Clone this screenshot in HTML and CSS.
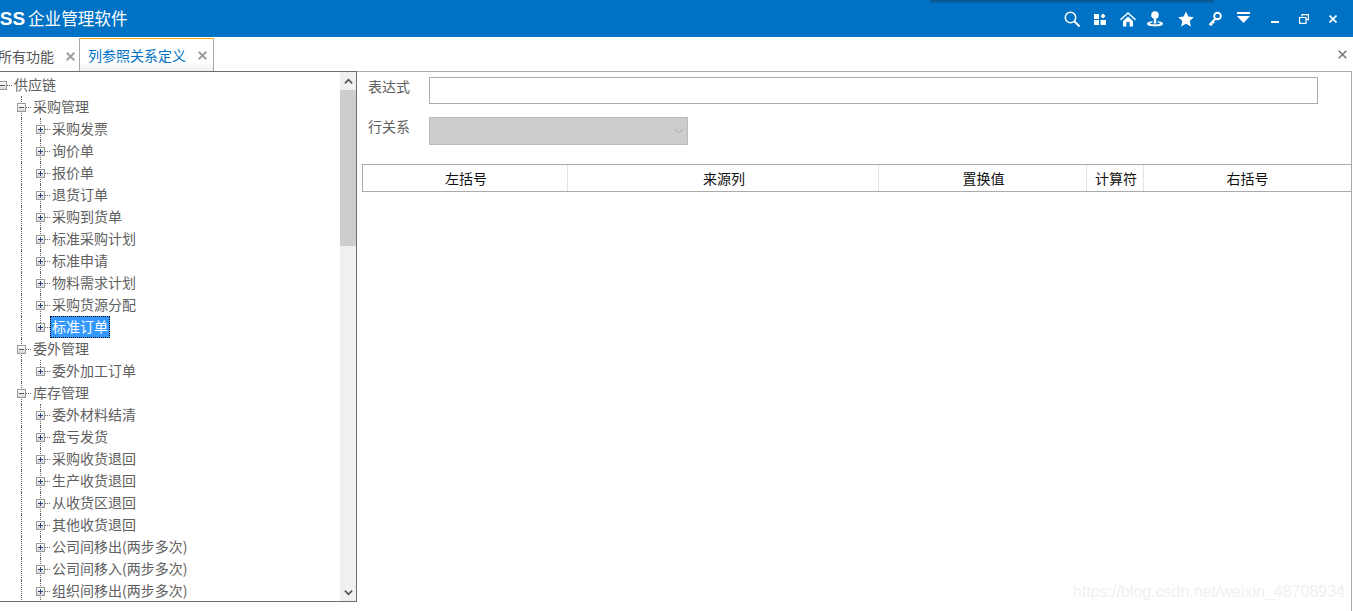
FILE: index.html
```html
<!DOCTYPE html>
<html lang="zh-CN">
<head>
<meta charset="utf-8">
<title>企业管理软件</title>
<link rel="stylesheet" href="styles.css">
</head>
<body>
<div class="app">
  <header class="topbar">
    <div class="shadow"></div>
    <span class="logo">GSS</span>
    <span class="title">企业管理软件</span>
    <div class="tools">
      <svg class="ic ic-search" viewBox="0 0 16 16"><circle cx="6.500" cy="6.500" r="5.200" fill="none" stroke="#fff" stroke-width="1.500"/><path d="M10.500 10.500L15.500 15.500" stroke="#fff" stroke-width="2"/></svg>
      <svg class="ic ic-grid" viewBox="0 0 12 12"><path fill="#fff" d="M0 1h5v5H0zM0 7h5v5H0zM6.500 7H12v5H6.500zM9 .5l2.500 2.500L9 5.500 6.500 3z"/></svg>
      <svg class="ic ic-home" viewBox="0 0 16 16"><path fill="#fff" d="M8 1L0 8.300l1 1L8 3l7 6.300 1-1zM3 10l5-4.500L13 10v5.500h-3.400V11H6.400v4.500H3z"/></svg>
      <svg class="ic ic-person" viewBox="0 0 16 16"><circle cx="8" cy="4" r="3.800" fill="#fff"/><path fill="#fff" d="M6.800 7h2.400v5.500H6.800zM5.500 10.200v1.300c-1.500.2-2.500.5-2.500.9 0 .5 2.200.9 5 .9s5-.4 5-.9c0-.4-1-.7-2.500-.9v-1.300c3 .2 5.500 1 5.500 2.400C16 14.800 12.400 15.500 8 15.500S0 14.800 0 12.600c0-1.400 2.500-2.200 5.500-2.400z"/></svg>
      <svg class="ic ic-star" viewBox="0 0 16 16"><path fill="#fff" d="M8 .5l2.300 5.100 5.500.6-4.100 3.700 1.200 5.500L8 12.700l-4.900 2.700 1.200-5.500L.2 6.200l5.500-.6z"/></svg>
      <svg class="ic ic-key" viewBox="0 0 14 16"><circle cx="9.500" cy="5" r="3.300" fill="none" stroke="#fff" stroke-width="1.900"/><path fill="none" stroke="#fff" stroke-width="2.200" d="M7.500 7.500L1.500 14M2.500 12.800l1.500 1.500M4.500 10.600l1.500 1.500"/></svg>
      <svg class="ic ic-drop" viewBox="0 0 13 12"><path fill="#fff" d="M0 0h13v2H0zM0 4h13L6.500 11z"/></svg>
    </div>
    <div class="winctl">
      <svg class="ic ic-min" viewBox="0 0 8 8"><path fill="#fff" d="M0 5h8v2H0z"/></svg>
      <svg class="ic ic-restore" viewBox="0 0 10 10"><path fill="none" stroke="#fff" stroke-width="1.200" d="M3 2.500V.6h6.400v5H7M.6 3.500h6.400v5.900H.6z"/></svg>
      <svg class="ic ic-close" viewBox="0 0 8 8"><path stroke="#fff" stroke-width="1.600" d="M.5.500l7 7M7.500.500l-7 7"/></svg>
    </div>
  </header>

  <nav class="tabs">
    <div class="tab"><span class="tab-text">所有功能</span><svg class="tab-x" viewBox="0 0 9 9"><path stroke="#a0a0a0" stroke-width="2" d="M.7.700l7.600 7.600M8.300.700L.7 8.300"/></svg></div>
    <div class="tab active"><span class="tab-text">列参照关系定义</span><svg class="tab-x" viewBox="0 0 9 9"><path stroke="#a0a0a0" stroke-width="2" d="M.7.700l7.600 7.600M8.300.700L.7 8.300"/></svg></div>
    <svg class="tabs-close" viewBox="0 0 9 9"><path stroke="#777" stroke-width="1.600" d="M.7.700l7.600 7.600M8.300.700L.7 8.300"/></svg>
  </nav>

  <main class="workspace">
    <section class="tree-panel">
      <div class="tree">
        <div class="row"><i class="cell"><b class="box minus"></b></i><span class="label">供应链</span></div>
        <div class="row"><i class="cell"></i><i class="cell line"><b class="box minus"></b></i><span class="label">采购管理</span></div>
        <div class="row"><i class="cell"></i><i class="cell line"></i><i class="cell line"><b class="box plus"></b></i><span class="label">采购发票</span></div>
        <div class="row"><i class="cell"></i><i class="cell line"></i><i class="cell line"><b class="box plus"></b></i><span class="label">询价单</span></div>
        <div class="row"><i class="cell"></i><i class="cell line"></i><i class="cell line"><b class="box plus"></b></i><span class="label">报价单</span></div>
        <div class="row"><i class="cell"></i><i class="cell line"></i><i class="cell line"><b class="box plus"></b></i><span class="label">退货订单</span></div>
        <div class="row"><i class="cell"></i><i class="cell line"></i><i class="cell line"><b class="box plus"></b></i><span class="label">采购到货单</span></div>
        <div class="row"><i class="cell"></i><i class="cell line"></i><i class="cell line"><b class="box plus"></b></i><span class="label">标准采购计划</span></div>
        <div class="row"><i class="cell"></i><i class="cell line"></i><i class="cell line"><b class="box plus"></b></i><span class="label">标准申请</span></div>
        <div class="row"><i class="cell"></i><i class="cell line"></i><i class="cell line"><b class="box plus"></b></i><span class="label">物料需求计划</span></div>
        <div class="row"><i class="cell"></i><i class="cell line"></i><i class="cell line"><b class="box plus"></b></i><span class="label">采购货源分配</span></div>
        <div class="row"><i class="cell"></i><i class="cell line"></i><i class="cell line end"><b class="box plus"></b></i><span class="label selected">标准订单</span></div>
        <div class="row"><i class="cell"></i><i class="cell line"><b class="box minus"></b></i><span class="label">委外管理</span></div>
        <div class="row"><i class="cell"></i><i class="cell line"></i><i class="cell line end"><b class="box plus"></b></i><span class="label">委外加工订单</span></div>
        <div class="row"><i class="cell"></i><i class="cell line"><b class="box minus"></b></i><span class="label">库存管理</span></div>
        <div class="row"><i class="cell"></i><i class="cell line"></i><i class="cell line"><b class="box plus"></b></i><span class="label">委外材料结清</span></div>
        <div class="row"><i class="cell"></i><i class="cell line"></i><i class="cell line"><b class="box plus"></b></i><span class="label">盘亏发货</span></div>
        <div class="row"><i class="cell"></i><i class="cell line"></i><i class="cell line"><b class="box plus"></b></i><span class="label">采购收货退回</span></div>
        <div class="row"><i class="cell"></i><i class="cell line"></i><i class="cell line"><b class="box plus"></b></i><span class="label">生产收货退回</span></div>
        <div class="row"><i class="cell"></i><i class="cell line"></i><i class="cell line"><b class="box plus"></b></i><span class="label">从收货区退回</span></div>
        <div class="row"><i class="cell"></i><i class="cell line"></i><i class="cell line"><b class="box plus"></b></i><span class="label">其他收货退回</span></div>
        <div class="row"><i class="cell"></i><i class="cell line"></i><i class="cell line"><b class="box plus"></b></i><span class="label">公司间移出(两步多次)</span></div>
        <div class="row"><i class="cell"></i><i class="cell line"></i><i class="cell line"><b class="box plus"></b></i><span class="label">公司间移入(两步多次)</span></div>
        <div class="row"><i class="cell"></i><i class="cell line"></i><i class="cell line"><b class="box plus"></b></i><span class="label">组织间移出(两步多次)</span></div>
      </div>
      <div class="scrollbar">
        <div class="arrow"><svg viewBox="0 0 10 7" class="chev"><path d="M1 5.500L5 1.500l4 4" fill="none" stroke="#555" stroke-width="2"/></svg></div>
        <div class="thumb"></div>
        <div class="track"></div>
        <div class="arrow"><svg viewBox="0 0 10 7" class="chev"><path d="M1 1.500L5 5.500l4-4" fill="none" stroke="#555" stroke-width="2"/></svg></div>
      </div>
    </section>

    <section class="detail">
      <div class="form-row first">
        <label class="form-label">表达式</label>
        <div class="input"></div>
      </div>
      <div class="form-row second">
        <label class="form-label">行关系</label>
        <div class="select"><svg viewBox="0 0 10 6" class="select-chev"><path d="M1 1l4 4 4-4" fill="none" stroke="#aaa" stroke-width="1"/></svg></div>
      </div>
      <div class="grid-head">
        <div class="col c1">左括号</div>
        <div class="col c2">来源列</div>
        <div class="col c3">置换值</div>
        <div class="col c4">计算符</div>
        <div class="col c5">右括号</div>
      </div>
      <div class="watermark">https://blog.csdn.net/weixin_48708934</div>
    </section>
  </main>
</div>
</body>
</html>
```

FILE: styles.css
```css
* { box-sizing: border-box; }
html, body { margin: 0; height: 100%; overflow: hidden; background: #fff; }
body { font-family: "Noto Sans CJK SC", "Noto Sans", sans-serif; font-size: 14px; }

.app { width: 1353px; height: 611px; display: flex; flex-direction: column; overflow: hidden; }

/* top bar */
.topbar { position: relative; height: 37px; flex: none; background: #0072c6; color: #fff; display: flex; align-items: center; padding-right: 16px; }
.shadow { position: absolute; left: 930px; top: 0; width: 284px; height: 4px; background: linear-gradient(#0a4f86, #0072c6); }
.logo { margin-left: -15px; font-family: "Liberation Sans", sans-serif; font-weight: 700; font-size: 19px; width: 43px; flex: none; }
.title { font-size: 16.6px; line-height: 37px; margin-top: -1px; }
.tools { margin-left: auto; display: flex; align-items: center; gap: 14px; }
.winctl { margin-left: 21px; display: flex; align-items: center; gap: 20px; }
.ic { display: block; flex: none; }
.ic-search, .ic-home, .ic-person, .ic-star { width: 16px; height: 16px; }
.ic-grid { width: 12px; height: 12px; }
.ic-key { width: 14px; height: 16px; }
.ic-drop { width: 13px; height: 12px; margin-left: 1px; margin-top: -2px; }
.ic-person { margin-left: -3px; }
.ic-star { margin-left: 1px; }
.ic-min { width: 8px; height: 8px; margin-top: 2px; }
.ic-restore { width: 10px; height: 10px; }
.ic-close { width: 8px; height: 8px; }

/* tabs */
.tabs { height: 34px; flex: none; display: flex; align-items: flex-end; padding-top: 1px; position: relative; }
.tab { height: 33px; display: flex; align-items: center; color: #555; width: 81px; margin-left: -2px; white-space: nowrap; padding-top: 2px; }
.tab-text { flex: none; }
.tab-x { display: block; flex: none; width: 9px; height: 9px; margin-left: 12px; margin-top: 1px; }
.tab.active { width: 135px; margin-left: 0; color: #0072c6; background: linear-gradient(#fff 70%, #f0f0f0); border: 1px solid #aaa; border-top: 1px solid #f5a800; border-bottom: none; padding: 0 0 0 8px; position: relative; z-index: 1; }
.tabs-close { position: absolute; right: 6px; top: 13px; width: 9px; height: 9px; display: block; }

/* workspace */
.workspace { height: 531px; flex: none; display: flex; align-items: stretch; }
.tree-panel { width: 358px; height: 531px; margin-left: -1px; border: 1px solid #6e6e6e; display: flex; overflow: hidden; background: #fff; }
.tree { flex: 1; min-width: 0; overflow: hidden; padding: 2px 0 0 0; }
.row { height: 22px; display: flex; align-items: center; margin-left: -7px; white-space: nowrap; color: #606060; }
.cell { position: relative; width: 19px; height: 22px; flex: none; display: block; font-style: normal; }
.cell.line::before { content: ""; position: absolute; left: 9px; top: 0; bottom: 0; border-left: 1px dotted #666; }
.cell.end::before { bottom: 11px; }
.box { position: absolute; left: 5px; top: 7px; width: 9px; height: 9px; border: 1px solid #999; background: linear-gradient(#fff, #d8d8d8); z-index: 1; }
.box::before { content: ""; position: absolute; left: 1px; top: 3px; width: 5px; height: 1px; background: #2a3f78; }
.box.plus::after { content: ""; position: absolute; left: 3px; top: 1px; width: 1px; height: 5px; background: #2a3f78; }
.box.minus::before { background: #555; }
.label { margin-left: 2px; line-height: 20px; padding-bottom: 2px; }
.cell:has(.box)::after { content: ""; position: absolute; left: 14px; top: 11px; width: 5px; border-top: 1px dotted #666; }
.label.selected { background: #3399ff; color: #fff; outline: 1px dotted #000; outline-offset: -1px; margin-left: 0; padding: 0 2px 1px; height: 22px; line-height: 20px; }

.scrollbar { width: 16px; flex: none; display: flex; flex-direction: column; background: #f0f0f0; }
.arrow { height: 18px; flex: none; display: flex; align-items: center; justify-content: center; }
.chev { width: 9px; height: 7px; display: block; }
.thumb { height: 156px; flex: none; background: #cdcdcd; }
.track { flex: 1; }

/* detail */
.detail { position: relative; flex: 1; min-width: 0; margin-right: 1px; border-top: 1px solid #aaa; border-right: 1px solid #aaa; height: 540px; padding-left: 5px; }
.form-row { display: flex; }
.form-row.first { margin-top: 5px; height: 27px; }
.form-row.second { margin-top: 13px; height: 28px; }
.form-label { width: 67px; padding-left: 6px; color: #606060; line-height: 18px; flex: none; }
.input { width: 889px; height: 27px; border: 1px solid #aaa; background: #fff; }
.select { width: 259px; height: 28px; border: 1px solid #bbb; background: #ccc; display: flex; align-items: center; justify-content: flex-end; padding-right: 3px; }
.select-chev { width: 10px; height: 6px; display: block; }
.grid-head { margin-top: 19px; height: 28px; display: flex; border: 1px solid #aaa; border-right: none; color: #111; }
.col { display: flex; align-items: center; justify-content: center; height: 26px; border-right: 1px solid #e2e2e2; flex: none; padding-left: 2px; }
.c1 { width: 205px; }
.c2 { width: 311px; }
.c3 { width: 208px; }
.c4 { width: 57px; }
.c5 { flex: 1; border-right: none; padding-left: 0; }
.watermark { position: absolute; right: 6px; top: 511px; font-family: "Liberation Sans", sans-serif; font-size: 16px; color: #f0f0f0; white-space: nowrap; }
```
